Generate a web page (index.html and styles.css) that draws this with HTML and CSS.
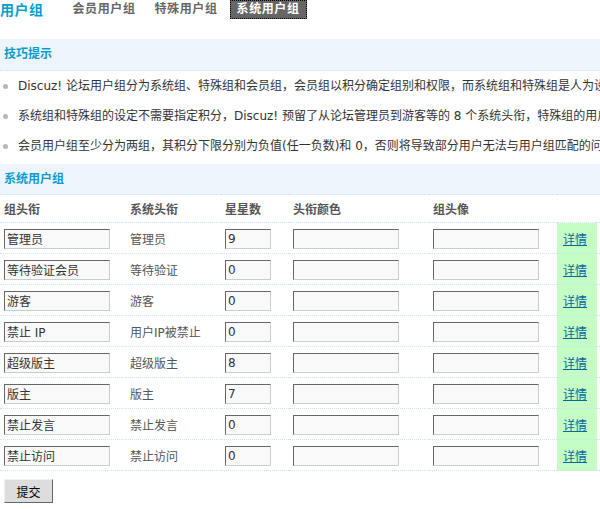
FILE: index.html
```html
<!DOCTYPE html>
<html lang="zh-CN">
<head>
    <meta charset="UTF-8">
    <title>用户组</title>
    <link rel="stylesheet" href="styles.css">
</head>
<body>
    <div class="page">
        <div class="itemtitle">
            <h3>用户组</h3>
            <ul class="tabs">
                <li><a href="#">会员用户组</a></li>
                <li><a href="#">特殊用户组</a></li>
                <li class="current"><a href="#">系统用户组</a></li>
            </ul>
        </div>

        <div class="tips">
            <div class="partition">技巧提示</div>
            <ul class="tiplist">
                <li>Discuz! 论坛用户组分为系统组、特殊组和会员组，会员组以积分确定组别和权限，而系统组和特殊组是人为设定，不会由系统自动变更。</li>
                <li>系统组和特殊组的设定不需要指定积分，Discuz! 预留了从论坛管理员到游客等的 8 个系统头衔，特殊组的用户需要在编辑会员时将其加入。</li>
                <li>会员用户组至少分为两组，其积分下限分别为负值(任一负数)和 0，否则将导致部分用户无法与用户组匹配的问题。</li>
            </ul>
        </div>

        <form>
            <table class="grouptable">
                <colgroup>
                    <col class="c1"><col class="c2"><col class="c3"><col class="c4"><col class="c5"><col class="c6"><col>
                </colgroup>
                <tr><th colspan="7" class="partition">系统用户组</th></tr>
                <tr class="header">
                    <th>组头衔</th>
                    <th>系统头衔</th>
                    <th>星星数</th>
                    <th>头衔颜色</th>
                    <th>组头像</th>
                    <th></th>
                    <th></th>
                </tr>
                <tr>
                    <td><input type="text" class="txt" value="管理员"></td>
                    <td>管理员</td>
                    <td><input type="text" class="txt num" value="9"></td>
                    <td><input type="text" class="txt"></td>
                    <td><input type="text" class="txt"></td>
                    <td class="detail"><a href="#">详情</a></td>
                    <td></td>
                </tr>
                <tr>
                    <td><input type="text" class="txt" value="等待验证会员"></td>
                    <td>等待验证</td>
                    <td><input type="text" class="txt num" value="0"></td>
                    <td><input type="text" class="txt"></td>
                    <td><input type="text" class="txt"></td>
                    <td class="detail"><a href="#">详情</a></td>
                    <td></td>
                </tr>
                <tr>
                    <td><input type="text" class="txt" value="游客"></td>
                    <td>游客</td>
                    <td><input type="text" class="txt num" value="0"></td>
                    <td><input type="text" class="txt"></td>
                    <td><input type="text" class="txt"></td>
                    <td class="detail"><a href="#">详情</a></td>
                    <td></td>
                </tr>
                <tr>
                    <td><input type="text" class="txt" value="禁止 IP"></td>
                    <td>用户IP被禁止</td>
                    <td><input type="text" class="txt num" value="0"></td>
                    <td><input type="text" class="txt"></td>
                    <td><input type="text" class="txt"></td>
                    <td class="detail"><a href="#">详情</a></td>
                    <td></td>
                </tr>
                <tr>
                    <td><input type="text" class="txt" value="超级版主"></td>
                    <td>超级版主</td>
                    <td><input type="text" class="txt num" value="8"></td>
                    <td><input type="text" class="txt"></td>
                    <td><input type="text" class="txt"></td>
                    <td class="detail"><a href="#">详情</a></td>
                    <td></td>
                </tr>
                <tr>
                    <td><input type="text" class="txt" value="版主"></td>
                    <td>版主</td>
                    <td><input type="text" class="txt num" value="7"></td>
                    <td><input type="text" class="txt"></td>
                    <td><input type="text" class="txt"></td>
                    <td class="detail"><a href="#">详情</a></td>
                    <td></td>
                </tr>
                <tr>
                    <td><input type="text" class="txt" value="禁止发言"></td>
                    <td>禁止发言</td>
                    <td><input type="text" class="txt num" value="0"></td>
                    <td><input type="text" class="txt"></td>
                    <td><input type="text" class="txt"></td>
                    <td class="detail"><a href="#">详情</a></td>
                    <td></td>
                </tr>
                <tr>
                    <td><input type="text" class="txt" value="禁止访问"></td>
                    <td>禁止访问</td>
                    <td><input type="text" class="txt num" value="0"></td>
                    <td><input type="text" class="txt"></td>
                    <td><input type="text" class="txt"></td>
                    <td class="detail"><a href="#">详情</a></td>
                    <td></td>
                </tr>
            </table>
            <div class="submitrow">
                <button type="button" class="btn">提交</button>
            </div>
        </form>
    </div>
</body>
</html>
```

FILE: styles.css
```css
html, body {
    overflow: hidden;
}
body {
    margin: 0;
    font-family: "DejaVu Sans", "Noto Sans CJK SC", sans-serif;
    font-size: 12px;
    color: #333;
    background: #fff;
}
.page {
    width: 1000px;
}
.itemtitle {
    display: flex;
    align-items: flex-start;
    height: 19px;
    margin-bottom: 20px;
}
.itemtitle h3 {
    margin: 0 22px 0 0;
    font-size: 14px;
    line-height: 19px;
    color: #0a9cce;
    font-family: "Noto Sans CJK SC", sans-serif;
    letter-spacing: 0.5px;
}
.tabs {
    display: flex;
    list-style: none;
    margin: 0;
    padding: 0;
}
.tabs li {
    margin-right: 5px;
}
.tabs a {
    display: block;
    padding: 0 6px;
    line-height: 17px;
    border: 1px solid transparent;
    color: #666;
    font-weight: bold;
    text-decoration: none;
    letter-spacing: 0.6px;
}
.tabs .current a {
    background: #666;
    color: #fff;
    border: 1px dotted #000;
}
.partition {
    background: #eef5fc;
    color: #0a9cce;
    font-weight: bold;
    text-align: left;
    padding: 0 0 0 4px;
}
.tips .partition {
    height: 31px;
    line-height: 31px;
    border-bottom: 1px dotted #cde3f4;
}
.tiplist {
    list-style: none;
    margin: 0;
    padding: 0 0 3px;
}
.tiplist li {
    position: relative;
    padding-left: 18px;
    line-height: 30px;
    white-space: nowrap;
    color: #333;
}
.tiplist li::before {
    content: "";
    position: absolute;
    left: 3px;
    top: 13px;
    width: 5px;
    height: 5px;
    border-radius: 50%;
    background: #b8b8b8;
}
form {
    margin: 0;
}
.grouptable {
    width: 100%;
    table-layout: fixed;
    border-collapse: collapse;
}
.grouptable .c1 { width: 126px; }
.grouptable .c2 { width: 95px; }
.grouptable .c3 { width: 68px; }
.grouptable .c4 { width: 140px; }
.grouptable .c5 { width: 128px; }
.grouptable .c6 { width: 40px; }
.grouptable th.partition {
    height: 30px;
    padding: 0 0 0 4px;
    line-height: 30px;
}
.grouptable .header th {
    height: 27px;
    padding: 0 0 0 4px;
    border-top: 1px dotted #cde3f4;
    text-align: left;
    color: #555;
    font-weight: bold;
}
.grouptable td {
    height: 30px;
    padding: 0 0 0 4px;
    border-top: 1px dotted #cde3f4;
    color: #555;
    white-space: nowrap;
    vertical-align: middle;
}
.grouptable tr:last-child td {
    border-bottom: 1px dotted #cde3f4;
}
.txt {
    display: block;
    box-sizing: border-box;
    width: 106px;
    height: 20px;
    margin-top: 1px;
    padding: 0 2px;
    border: 1px solid;
    border-color: #666 #ccc #ccc #666;
    background: #f9f9f9;
    font-family: "DejaVu Sans", "Noto Sans CJK SC", sans-serif;
    font-size: 12px;
    color: #333;
}
.txt.num {
    width: 46px;
}
.grouptable td.detail {
    background: #c5fec5;
    padding-left: 6px;
}
.detail a {
    color: #06699a;
    text-decoration: underline;
}
.submitrow {
    padding: 8px 0 0 4px;
}
.btn {
    width: 49px;
    height: 24px;
    padding: 0;
    border: 1px solid;
    border-color: #f0f0f0 #666 #666 #f0f0f0;
    background: #ddd;
    font-family: "Noto Sans CJK SC", sans-serif;
    font-size: 12px;
    color: #000;
}
```
